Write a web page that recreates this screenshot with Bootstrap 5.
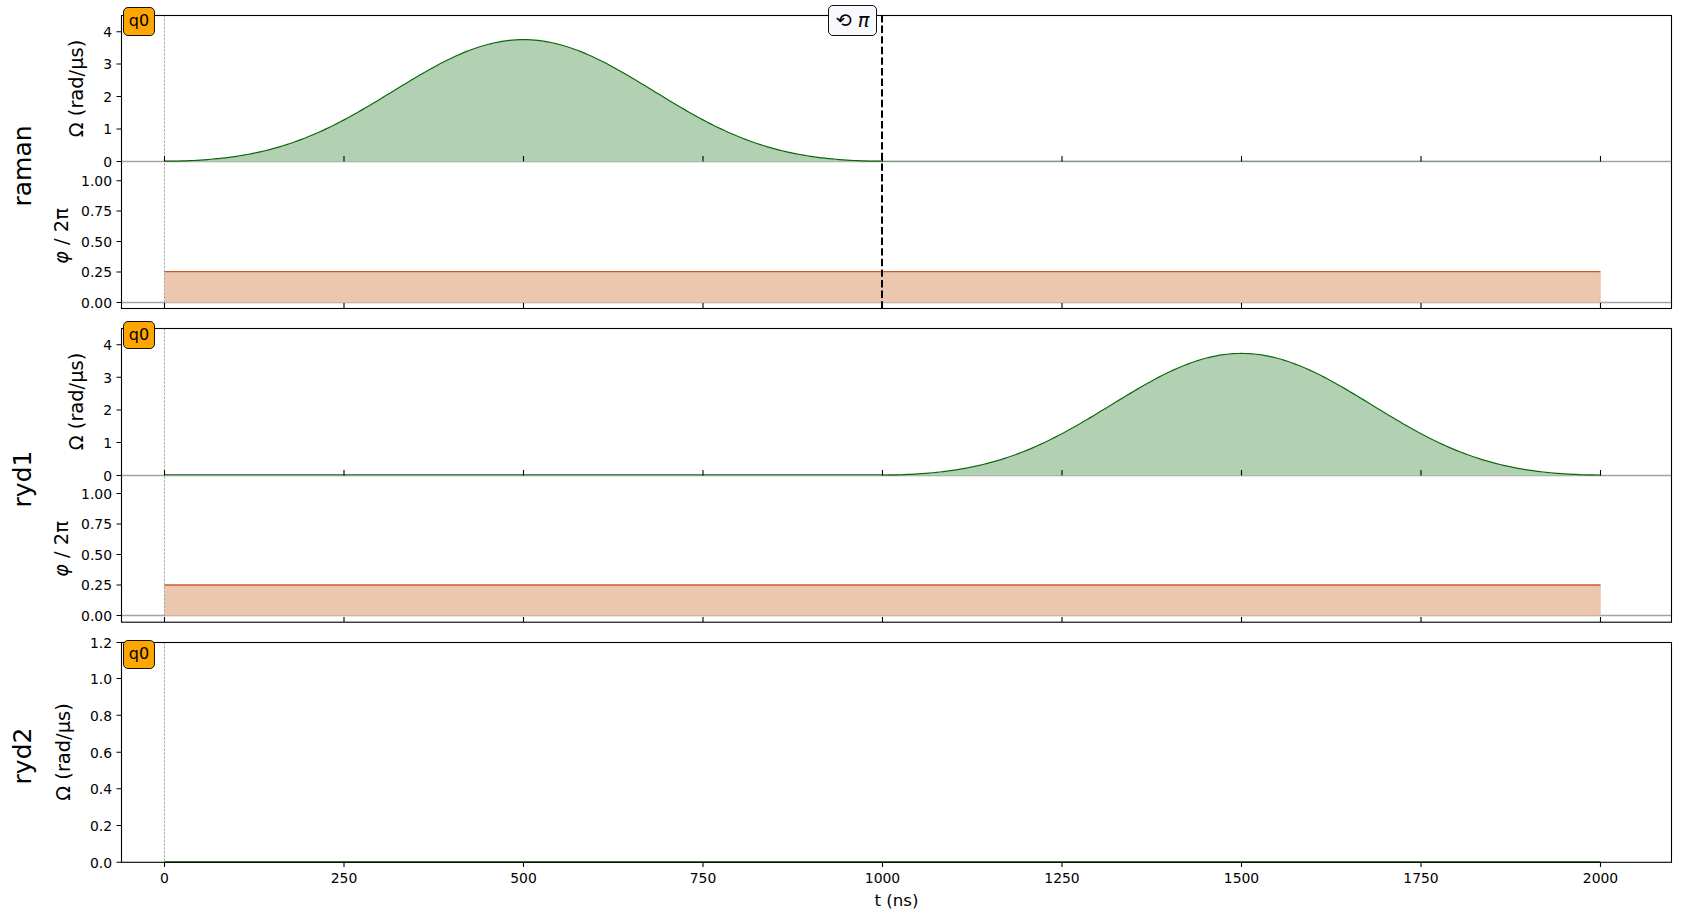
<!DOCTYPE html>
<html lang="en">
<head>
<meta charset="utf-8">
<title>Pulse sequence</title>
<link rel="stylesheet" href="https://cdn.jsdelivr.net/npm/bootstrap@5.3.0/dist/css/bootstrap.min.css">
<style>
html,body{background:#fff;margin:0;height:919px;overflow:hidden}
body{font-family:"DejaVu Sans",sans-serif;color:#000}
.figure-wrap{padding-top:15px;gap:20px;width:1692px}
.panel{width:1692px}
.panel-a{height:293px}
.panel-b{height:294px}
.panel-c{height:220px}
.panel svg{display:block;overflow:visible;position:absolute;left:0;top:0;width:1692px}
.panel-a svg{height:293px}
.panel-b svg{height:294px}
.panel-c svg{height:220px}
svg text{font-family:"DejaVu Sans",sans-serif;fill:#000}
.tl{font-size:13.9px;text-anchor:end}
.xl{font-size:13.9px;text-anchor:middle}
.al{font-size:19.44px;text-anchor:middle}
.tx{font-size:16.67px;text-anchor:middle}
.cl{font-size:25px;text-anchor:middle}
.frame{fill:none;stroke:#000;stroke-width:1.1}
.tick{stroke:#000;stroke-width:1.1}
.zero{stroke:#a3a3a3;stroke-width:1.3}
.start{stroke:#8a8a8a;stroke-width:.7;stroke-dasharray:2.6 1.2}
.amp-fill{fill:#b2d1b2}
.amp-line{fill:none;stroke:#0b650b;stroke-width:1.2}
.ph-fill{fill:#ecc7b0}
.ph-line{stroke:#cb5c20;stroke-width:1.3}
.ph-edge{stroke:#f0bd9f;stroke-width:1}
.target{stroke:#000;stroke-width:2;stroke-dasharray:7.4 3.2}
.q-tag,.rot-tag{position:absolute;display:flex;align-items:center;justify-content:center;border:1px solid #111;border-radius:5px;line-height:1;white-space:nowrap}
.q-tag{left:123px;width:32px;height:28.5px;background:#ffa500;font-size:16px}
.panel-a .q-tag{top:-8px}
.panel-b .q-tag{top:-7.5px}
.panel-c .q-tag{top:-2px}
.rot-tag{left:828px;top:-10px;width:49px;height:31px;background:#f8f8ff;font-size:19.44px;gap:6px}
.rot-tag i{font-family:"DejaVu Sans",sans-serif}
</style>
</head>
<body>
<main class="figure-wrap d-flex flex-column">

<section class="panel panel-a position-relative">
<svg viewBox="0 15 1692 293" aria-label="raman channel">
<line class="zero" x1="121.5" x2="1671.5" y1="161.5" y2="161.5"/>
<line class="zero" x1="121.5" x2="1671.5" y1="302.5" y2="302.5"/>
<path class="amp-fill" data-start="164.5" data-base="161.5"/>
<path class="amp-line" data-start="164.5" data-base="161.2"/>
<line class="amp-line" x1="882.5" x2="1600.5" y1="161.2" y2="161.2" opacity=".25"/>
<rect class="ph-fill" x="164.5" y="271.7" width="1436" height="30.8"/>
<line class="ph-edge" x1="1600" x2="1600" y1="272" y2="302"/>
<line class="ph-line" x1="164.5" x2="1600.5" y1="271.7" y2="271.7"/>
<line class="start" x1="164.5" x2="164.5" y1="15" y2="308"/>
<path class="tick" d="M164.5 156V161.5M344 156V161.5M523.5 156V161.5M703 156V161.5M882.5 156V161.5M1062 156V161.5M1241.5 156V161.5M1421 156V161.5M1600.5 156V161.5"/>
<path class="tick" d="M164.5 303V308M344 303V308M523.5 303V308M703 303V308M882.5 303V308M1062 303V308M1241.5 303V308M1421 303V308M1600.5 303V308"/>
<path class="tick" d="M116.5 31.7H121.5M116.5 64H121.5M116.5 96.5H121.5M116.5 129H121.5M116.5 161.5H121.5M116.5 180.7H121.5M116.5 211H121.5M116.5 241.5H121.5M116.5 272H121.5M116.5 302.5H121.5"/>
<rect class="frame" x="121.5" y="15.5" width="1550" height="293"/>
<line class="target" x1="882" x2="882" y1="15" y2="308"/>
<text class="tl" x="112" y="37">4</text><text class="tl" x="112" y="69.3">3</text><text class="tl" x="112" y="101.8">2</text><text class="tl" x="112" y="134.3">1</text><text class="tl" x="112" y="166.8">0</text>
<text class="tl" x="112" y="186">1.00</text><text class="tl" x="112" y="216.3">0.75</text><text class="tl" x="112" y="246.8">0.50</text><text class="tl" x="112" y="277.3">0.25</text><text class="tl" x="112" y="307.8">0.00</text>
<text class="al" transform="translate(83 88.5) rotate(-90)">Ω (rad/µs)</text>
<text class="al" transform="translate(68 236) rotate(-90)"><tspan font-style="italic">φ</tspan> / 2π</text>
<text class="cl" transform="translate(31 166) rotate(-90)">raman</text>
</svg>
<span class="q-tag">q0</span>
<span class="rot-tag">⟲ <i>π</i></span>
</section>

<section class="panel panel-b position-relative">
<svg viewBox="0 328 1692 294" aria-label="ryd1 channel">
<line class="zero" x1="121.5" x2="1671.5" y1="475.5" y2="475.5"/>
<line class="zero" x1="121.5" x2="1671.5" y1="615.5" y2="615.5"/>
<path class="amp-fill" data-start="882.5" data-base="475.5"/>
<path class="amp-line" data-start="882.5" data-base="475"/>
<line class="amp-line" x1="164.5" x2="882.5" y1="474.7" y2="474.7" opacity=".7"/>
<rect class="ph-fill" x="164.5" y="585" width="1436" height="30.5"/>
<line class="ph-edge" x1="1600" x2="1600" y1="585" y2="615"/>
<line class="ph-line" x1="164.5" x2="1600.5" y1="585" y2="585"/>
<line class="start" x1="164.5" x2="164.5" y1="328" y2="622"/>
<path class="tick" d="M164.5 470V475.5M344 470V475.5M523.5 470V475.5M703 470V475.5M882.5 470V475.5M1062 470V475.5M1241.5 470V475.5M1421 470V475.5M1600.5 470V475.5"/>
<path class="tick" d="M164.5 617V622M344 617V622M523.5 617V622M703 617V622M882.5 617V622M1062 617V622M1241.5 617V622M1421 617V622M1600.5 617V622"/>
<path class="tick" d="M116.5 344.7H121.5M116.5 377.3H121.5M116.5 410H121.5M116.5 442.5H121.5M116.5 475.5H121.5M116.5 493.5H121.5M116.5 524H121.5M116.5 554.5H121.5M116.5 585H121.5M116.5 615.5H121.5"/>
<rect class="frame" x="121.5" y="328.5" width="1550" height="293.7"/>
<text class="tl" x="112" y="350">4</text><text class="tl" x="112" y="382.6">3</text><text class="tl" x="112" y="415.3">2</text><text class="tl" x="112" y="447.8">1</text><text class="tl" x="112" y="480.8">0</text>
<text class="tl" x="112" y="498.8">1.00</text><text class="tl" x="112" y="529.3">0.75</text><text class="tl" x="112" y="559.8">0.50</text><text class="tl" x="112" y="590.3">0.25</text><text class="tl" x="112" y="620.8">0.00</text>
<text class="al" transform="translate(83 401.5) rotate(-90)">Ω (rad/µs)</text>
<text class="al" transform="translate(68 549) rotate(-90)"><tspan font-style="italic">φ</tspan> / 2π</text>
<text class="cl" transform="translate(31 479) rotate(-90)">ryd1</text>
</svg>
<span class="q-tag">q0</span>
</section>

<section class="panel panel-c position-relative">
<svg viewBox="0 642 1692 220" aria-label="ryd2 channel">
<line class="start" x1="164.5" x2="164.5" y1="642" y2="862"/>
<line x1="164.5" x2="1600.5" y1="862" y2="862" stroke="#0b650b" stroke-width="1.4"/>
<path class="tick" d="M164.5 862V867M344 862V867M523.5 862V867M703 862V867M882.5 862V867M1062 862V867M1241.5 862V867M1421 862V867M1600.5 862V867"/>
<path class="tick" d="M116.5 642.5H121.5M116.5 678.5H121.5M116.5 715.3H121.5M116.5 752.2H121.5M116.5 788.8H121.5M116.5 825.5H121.5M116.5 862.3H121.5"/>
<rect class="frame" x="121.5" y="642.5" width="1550" height="219.8"/>
<text class="tl" x="112" y="647.8">1.2</text><text class="tl" x="112" y="683.8">1.0</text><text class="tl" x="112" y="720.6">0.8</text><text class="tl" x="112" y="757.5">0.6</text><text class="tl" x="112" y="794.1">0.4</text><text class="tl" x="112" y="830.8">0.2</text><text class="tl" x="112" y="867.6">0.0</text>
<text class="xl" x="164.5" y="883">0</text><text class="xl" x="344" y="883">250</text><text class="xl" x="523.5" y="883">500</text><text class="xl" x="703" y="883">750</text><text class="xl" x="882.5" y="883">1000</text><text class="xl" x="1062" y="883">1250</text><text class="xl" x="1241.5" y="883">1500</text><text class="xl" x="1421" y="883">1750</text><text class="xl" x="1600.5" y="883">2000</text>
<text class="tx" x="896.5" y="905.5">t (ns)</text>
<text class="al" transform="translate(70 752) rotate(-90)">Ω (rad/µs)</text>
<text class="cl" transform="translate(31 756) rotate(-90)">ryd2</text>
</svg>
<span class="q-tag">q0</span>
</section>

</main>
<script>
/* Blackman waveform, peak 3.74 rad/µs, 1000 ns long, 32.5 px per rad/µs */
document.querySelectorAll('path[data-start]').forEach(function(p){
  var x0=+p.dataset.start,b=+p.dataset.base,n=200,pts=[];
  for(var i=0;i<=n;i++){
    var u=i/n,f=.42-.5*Math.cos(2*Math.PI*u)+.08*Math.cos(4*Math.PI*u);
    pts.push((x0+718*u).toFixed(2)+' '+(b-3.74*32.5*f).toFixed(2));
  }
  p.setAttribute('d','M'+pts.join('L')+(p.classList.contains('amp-fill')?'Z':''));
});
</script>
<script src="https://cdn.jsdelivr.net/npm/bootstrap@5.3.0/dist/js/bootstrap.bundle.min.js"></script>
</body>
</html>
